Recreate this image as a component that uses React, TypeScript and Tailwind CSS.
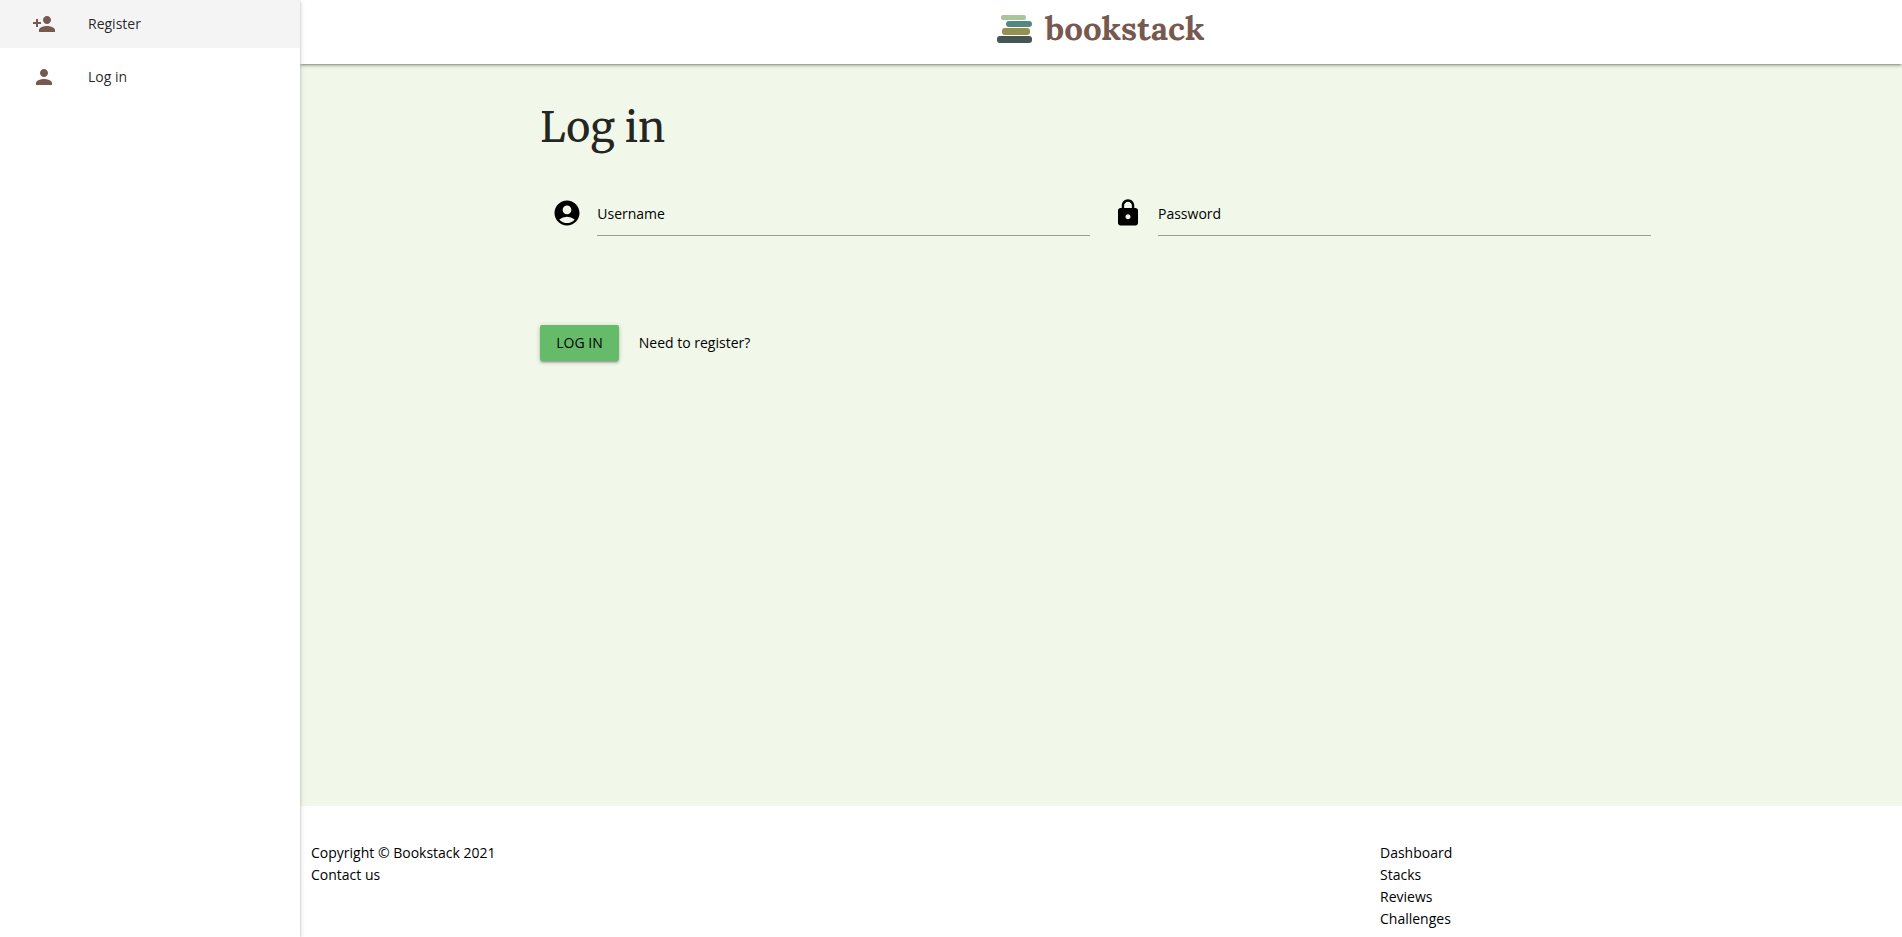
import type { ReactNode } from "react";
import type { IconType } from "react-icons";
import { MdAccountCircle, MdLock, MdPerson, MdPersonAdd } from "react-icons/md";

function SideLink({ icon: Icon, active, children }: { icon: IconType; active?: boolean; children: ReactNode }) {
  return (
    <li>
      <a
        href="#"
        className={`flex h-12 items-center gap-8 px-8 text-sm font-medium text-black/87 ${active ? "bg-[#f4f4f4]" : "hover:bg-[#f4f4f4]"}`}
      >
        <Icon className="size-6 text-[#775950]" aria-hidden="true" />
        {children}
      </a>
    </li>
  );
}

function Field({ id, label, type, icon: Icon }: { id: string; label: string; type: string; icon: IconType }) {
  return (
    <div className="flex flex-1 items-center pr-[11px] pl-3">
      <Icon className="mr-[15px] size-[30px] shrink-0 text-black" aria-hidden="true" />
      <div className="relative flex-1">
        <input
          id={id}
          type={type}
          placeholder=" "
          className="peer block h-[46px] w-full border-b border-[#9e9e9e] bg-transparent outline-none focus:border-[#66bb6a]"
        />
        <label
          htmlFor={id}
          className="pointer-events-none absolute inset-y-0 left-0 flex items-center pt-0.5 peer-focus:hidden peer-[:not(:placeholder-shown)]:hidden"
        >
          {label}
        </label>
      </div>
    </div>
  );
}

function Logo() {
  return (
    <a href="#" className="flex h-[57px] items-center gap-3 text-[#775950]">
      <svg viewBox="0 0 36 28" className="h-7 w-9" aria-hidden="true">
        <rect x="4" y="0" width="25" height="5" rx="2" fill="#a9c59c" />
        <rect x="9" y="6" width="26" height="6" rx="3" fill="#52897f" />
        <rect x="5" y="13" width="28" height="7" rx="3" fill="#958f52" />
        <rect x="0" y="21" width="35" height="7" rx="3" fill="#445754" />
      </svg>
      <span className="font-['Lora','Liberation_Serif',serif] text-[33px] leading-none font-bold">bookstack</span>
    </a>
  );
}

export default function App() {
  return (
    <div className="flex min-h-screen bg-white font-['Open_Sans','Noto_Sans',sans-serif] text-sm leading-[22px] text-black">
      <nav className="z-20 w-[300px] shrink-0 bg-white shadow-[0_2px_2px_0_rgba(0,0,0,0.14),0_3px_1px_-2px_rgba(0,0,0,0.12),0_1px_5px_0_rgba(0,0,0,0.2)]">
        <ul className="flex flex-col gap-[5px]">
          <SideLink icon={MdPersonAdd} active>Register</SideLink>
          <SideLink icon={MdPerson}>Log in</SideLink>
        </ul>
      </nav>
      <div className="flex min-w-0 flex-1 flex-col">
        <header className="z-10 flex h-16 justify-center bg-white shadow-[0_2px_2px_0_rgba(0,0,0,0.14),0_3px_1px_-2px_rgba(0,0,0,0.12),0_1px_5px_0_rgba(0,0,0,0.2)]">
          <Logo />
        </header>
        <main className="flex-1 bg-[#f1f8e9]">
          <div className="mx-auto w-[70%] pt-[38px]">
            <h1 className="font-['Merriweather','Liberation_Serif',serif] text-[41px] leading-[52px] font-normal text-black/87">Log in</h1>
            <form onSubmit={(event) => event.preventDefault()}>
              <div className="flex pt-9">
                <Field id="username" label="Username" type="text" icon={MdAccountCircle} />
                <Field id="password" label="Password" type="password" icon={MdLock} />
              </div>
              <div className="flex items-center gap-5 pt-[89px]">
                <button
                  type="submit"
                  className="h-9 rounded-xs bg-[#66bb6a] px-4 uppercase shadow-[0_2px_2px_0_rgba(0,0,0,0.14),0_3px_1px_-2px_rgba(0,0,0,0.12),0_1px_5px_0_rgba(0,0,0,0.2)]"
                >
                  Log in
                </button>
                <a href="#">Need to register?</a>
              </div>
            </form>
          </div>
        </main>
        <footer className="grid grid-cols-3 bg-white pt-9 pb-[7px]">
          <div className="col-span-2 px-[11px]">
            <p>Copyright © Bookstack 2021</p>
            <a href="#">Contact us</a>
          </div>
          <ul className="px-3">
            <li><a href="#">Dashboard</a></li>
            <li><a href="#">Stacks</a></li>
            <li><a href="#">Reviews</a></li>
            <li><a href="#">Challenges</a></li>
          </ul>
        </footer>
      </div>
    </div>
  );
}
